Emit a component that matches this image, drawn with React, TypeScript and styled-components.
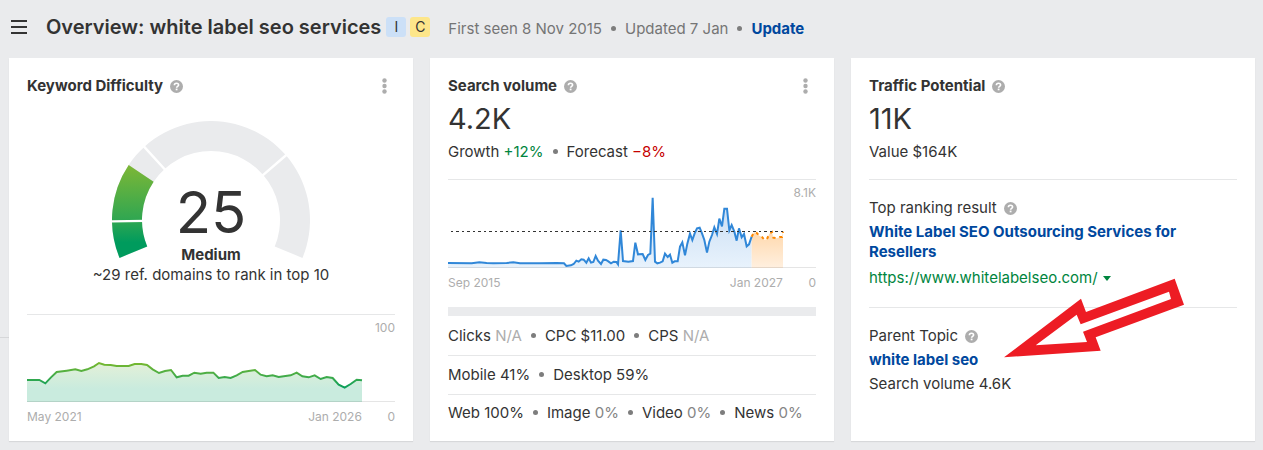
import React from "react";
import styled, { createGlobalStyle, css } from "styled-components";

const GlobalStyle = createGlobalStyle`
  *, *::before, *::after { box-sizing: border-box; }
  body {
    margin: 0;
    background: #eaebed;
    color: #333;
    font-family: Inter, "Liberation Sans", sans-serif;
    font-size: 15px;
    line-height: 20px;
  }
  h1, h2, p { margin: 0; }
  button { font: inherit; color: inherit; border: 0; padding: 0; background: none; cursor: pointer; }
  a { color: #00489e; text-decoration: none; }
  svg { display: block; }
`;

const Page = styled.div`
  padding: 0 8px 8px 9px;
`;

const TopBar = styled.header`
  display: flex;
  align-items: center;
  height: 58px;
  padding: 0 0 5px 1px;
`;

const MenuButton = styled.button`
  width: 18px;
  margin-right: 18px;
`;

const Title = styled.h1`
  font-size: 20px;
  line-height: 28px;
  font-weight: 600;
  margin-right: 5px;
  white-space: nowrap;
`;

const Intent = styled.span<{ $color: string }>`
  width: 20px;
  height: 20px;
  margin-right: 4px;
  border-radius: 3px;
  background: ${(p) => p.$color};
  font-size: 14px;
  line-height: 20px;
  text-align: center;
`;

const Meta = styled.p`
  margin-left: 14px;
  padding-top: 4px;
  color: #757575;
  white-space: nowrap;
  a { font-weight: 700; }
`;

const Dot = styled.span`
  display: inline-block;
  width: 5px;
  height: 5px;
  margin: 0 9px;
  border-radius: 50%;
  background: #7d7d7d;
  vertical-align: 3px;
`;

const Cards = styled.main`
  position: relative;
  display: grid;
  grid-template-columns: repeat(3, minmax(0, 1fr));
  gap: 17px;
  &::before {
    content: "";
    position: absolute;
    left: -9px;
    top: 279px;
    width: 9px;
    height: 1px;
    background: #d6d7d9;
  }
`;

const Card = styled.section`
  position: relative;
  display: flex;
  flex-direction: column;
  padding: 16px 18px 10px;
  background: #fff;
  box-shadow: 0 1px 1px rgba(0, 0, 0, 0.08);
`;

const CardHeader = styled.div`
  display: flex;
  align-items: center;
  justify-content: space-between;
  height: 24px;
`;

const Label = styled.div`
  display: flex;
  align-items: center;
  gap: 7px;
  line-height: 24px;
`;

const CardTitle = styled.h2`
  font-size: 15px;
  line-height: 24px;
  font-weight: 700;
`;

const IconButton = styled.button`
  display: block;
  flex: none;
`;

const KebabButton = styled(IconButton)`
  padding: 0 8px;
`;

const Value = styled.p`
  margin-top: 3px;
  font-size: 29px;
  line-height: 36px;
`;

const SubLine = styled.p`
  line-height: 24px;
`;

const Summary = styled.div`
  padding-bottom: 15px;
  ${SubLine} { margin-top: 3px; }
`;

const Tone = styled.span<{ $color: string }>`
  color: ${(p) => p.$color};
`;

const GaugeBox = styled.div`
  display: flex;
  flex-direction: column;
  align-items: center;
  padding-top: 23px;
`;

const GaugeText = styled.div`
  display: flex;
  flex-direction: column;
  align-items: center;
  margin-top: -77px;
  margin-bottom: 29px;
  white-space: nowrap;
`;

const Score = styled.span`
  font-size: 58px;
  line-height: 60px;
`;

const Strong = styled.strong`
  font-weight: 700;
  line-height: 20px;
  margin-top: 3px;
`;

const Chart = styled.figure`
  position: relative;
  margin: 0;
  border-top: 1px solid #e6e7e8;
`;

const Plot = styled.svg<{ $h: number }>`
  width: 100%;
  height: ${(p) => p.$h}px;
  polyline, line { vector-effect: non-scaling-stroke; }
`;

const axisText = css`
  color: #adadad;
  font-size: 12px;
  line-height: 16px;
`;

const MaxLabel = styled.span`
  ${axisText}
  position: absolute;
  top: 5px;
  right: 0;
`;

const Axis = styled.figcaption`
  ${axisText}
  display: flex;
  justify-content: space-between;
  margin-top: 7px;
`;

const AxisRange = styled.span`
  display: flex;
  justify-content: space-between;
  width: 91%;
`;

const Band = styled.div`
  height: 9px;
  margin: 16px 0 1px;
  background: #eaebed;
`;

const StatRow = styled.p`
  line-height: 38px;
  border-bottom: 1px solid #e6e7e8;
  white-space: nowrap;
  &:last-child { border-bottom: 0; line-height: 36px; }
`;

const Block = styled.div`
  border-top: 1px solid #e6e7e8;
  padding: 16px 0 17px;
`;

const BoldLink = styled.a`
  display: block;
  font-weight: 700;
  line-height: 20px;
  margin: 2px 0;
`;

const UrlRow = styled.div`
  display: flex;
  align-items: center;
  gap: 5px;
  margin-top: 4px;
  line-height: 24px;
  a { color: #00853e; }
`;

const Arrow = styled.svg`
  position: absolute;
  left: 153px;
  top: 218px;
`;

const Help = ({ about }: { about: string }) => (
  <IconButton type="button" aria-label={`About ${about}`}>
    <svg width="13" height="13" viewBox="0 0 13 13">
      <circle cx="6.5" cy="6.5" r="6.5" fill="#adadad" />
      <path d="M4.4 5.2c0-1.2.9-1.9 2.1-1.9s2.1.7 2.1 1.7c0 1.3-2 1.3-2 2.7" fill="none" stroke="#fff" strokeWidth="1.6" />
      <rect x="5.7" y="8.6" width="1.8" height="1.7" fill="#fff" />
    </svg>
  </IconButton>
);

const Kebab = () => (
  <KebabButton type="button" aria-label="More options">
    <svg width="5" height="16" viewBox="0 0 5 16" fill="#adadad">
      <circle cx="2.5" cy="2.5" r="2.2" />
      <circle cx="2.5" cy="8" r="2.2" />
      <circle cx="2.5" cy="13.5" r="2.2" />
    </svg>
  </KebabButton>
);

const CX = 99;
const CY = 99;

/* Degrees run clockwise from the nine o'clock position. */
const polar = (r: number, deg: number) => {
  const a = (deg * Math.PI) / 180;
  return `${(CX - r * Math.cos(a)).toFixed(2)} ${(CY - r * Math.sin(a)).toFixed(2)}`;
};
const ring = (from: number, to: number) => {
  const large = to - from > 180 ? 1 : 0;
  return `M${polar(99, from)}A99 99 0 ${large} 1 ${polar(99, to)}L${polar(69, to)}A69 69 0 ${large} 0 ${polar(69, from)}Z`;
};
const divider = (deg: number) => `M${polar(66, deg)}L${polar(101, deg)}`;

const Gauge = () => (
  <svg width="198" height="138" viewBox="0 0 198 138">
    <defs>
      <linearGradient id="gauge" x1="0" y1="44" x2="0" y2="130" gradientUnits="userSpaceOnUse">
        <stop offset="0" stopColor="#7db736" />
        <stop offset="0.65" stopColor="#2ea652" />
        <stop offset="0.9" stopColor="#009b5d" />
      </linearGradient>
    </defs>
    <path d={ring(-22.5, 202.5)} fill="#eaebed" />
    <path d={ring(-22.5, 33.75)} fill="url(#gauge)" />
    <path d={divider(-0.8) + divider(47.6) + divider(139.2)} stroke="#fff" strokeWidth="2.4" />
  </svg>
);

const difficulty =
  "0,198 37,198 55,208 72,190 89,174 119,170 145,166 163,171 181,166 201,157 216,147 232,152 251,153 269,156 305,156 323,150 343,150 360,153 377,166 396,177 414,171 432,168 449,190 467,185 485,185 502,176 521,179 539,176 559,176 575,192 593,189 611,192 629,184 647,174 665,171 684,168 701,182 719,187 737,184 755,189 791,184 809,176 826,187 845,190 863,184 881,195 899,189 917,192 935,212 953,221 971,210 989,197 1005,199";

const volume =
  "0,252 71,253 94,250 116,252 136,253 176,252 196,250 216,253 276,253 326,252 348,253 355,261 369,259 377,255 385,245 392,248 400,241 407,242 415,251 422,238 429,251 436,249 443,231 450,245 459,255 466,242 474,243 481,247 489,253 497,248 505,249 510,256 518,154 525,246 541,248 555,246 562,191 570,226 584,225 592,243 600,228 607,224 614,56 621,248 628,253 636,251 644,247 651,224 659,234 666,227 673,251 680,247 689,247 696,203 703,190 711,229 718,194 726,164 733,183 740,163 747,148 755,146 762,163 769,183 777,221 784,188 792,168 799,145 807,165 814,119 822,142 829,89 837,89 844,154 851,138 859,158 866,185 873,148 881,175 888,165 896,202 903,196 911,173";

const forecast =
  "911,173 918,160 926,162 934,170 942,174 950,183 957,180 964,164 972,159 976,176 986,178 996,174 1002,174 1005,158";

export default function App() {
  return (
    <>
      <GlobalStyle />
      <Page>
        <TopBar>
          <MenuButton type="button" aria-label="Menu">
            <svg width="18" height="14" viewBox="0 0 18 14" fill="#333">
              <path d="M1 0h16v2H1zM1 6h16v2H1zM1 12h16v2H1z" />
            </svg>
          </MenuButton>
          <Title>Overview: white label seo services</Title>
          <Intent $color="#cce0f7">I</Intent>
          <Intent $color="#fde68a">C</Intent>
          <Meta>
            First seen 8 Nov 2015
            <Dot />
            Updated 7 Jan
            <Dot />
            <a href="#update">Update</a>
          </Meta>
        </TopBar>

        <Cards>
          <Card>
            <CardHeader>
              <Label>
                <CardTitle>Keyword Difficulty</CardTitle>
                <Help about="Keyword Difficulty" />
              </Label>
              <Kebab />
            </CardHeader>
            <GaugeBox>
              <Gauge />
              <GaugeText>
                <Score>25</Score>
                <Strong>Medium</Strong>
                <span>~29 ref. domains to rank in top 10</span>
              </GaugeText>
            </GaugeBox>
            <Chart>
              <Plot $h={87} viewBox="0 3 1104 261" preserveAspectRatio="none">
                <defs>
                  <linearGradient id="kdLine" x1="0" y1="147" x2="0" y2="221" gradientUnits="userSpaceOnUse">
                    <stop offset="0" stopColor="#76b82f" />
                    <stop offset="0.5" stopColor="#45ac48" />
                    <stop offset="1" stopColor="#0a9f5c" />
                  </linearGradient>
                  <linearGradient id="kdFill" x1="0" y1="147" x2="0" y2="225" gradientUnits="userSpaceOnUse">
                    <stop offset="0" stopColor="#e3f0d8" />
                    <stop offset="1" stopColor="#c9ebde" />
                  </linearGradient>
                </defs>
                <polygon points={`0,264 ${difficulty} 1005,264`} fill="url(#kdFill)" />
                <line x1="0" y1="262" x2="1104" y2="262" stroke="#000" strokeOpacity="0.1" shapeRendering="crispEdges" />
                <polyline points={difficulty} fill="none" stroke="url(#kdLine)" strokeWidth="2" />
              </Plot>
              <MaxLabel>100</MaxLabel>
              <Axis>
                <AxisRange>
                  <span>May 2021</span>
                  <span>Jan 2026</span>
                </AxisRange>
                <span>0</span>
              </Axis>
            </Chart>
          </Card>

          <Card>
            <CardHeader>
              <Label>
                <CardTitle>Search volume</CardTitle>
                <Help about="Search volume" />
              </Label>
              <Kebab />
            </CardHeader>
            <Summary>
              <Value>4.2K</Value>
              <SubLine>
                Growth <Tone $color="#00853e">+12%</Tone>
                <Dot />
                Forecast <Tone $color="#c60000">−8%</Tone>
              </SubLine>
            </Summary>
            <Chart>
              <Plot $h={88} viewBox="0 3 1104 264" preserveAspectRatio="none">
                <defs>
                  <linearGradient id="svFill" x1="0" y1="56" x2="0" y2="264" gradientUnits="userSpaceOnUse">
                    <stop offset="0" stopColor="#c6dcf3" />
                    <stop offset="1" stopColor="#e8f2fc" />
                  </linearGradient>
                  <linearGradient id="fcFill" x1="0" y1="160" x2="0" y2="264" gradientUnits="userSpaceOnUse">
                    <stop offset="0" stopColor="#ffd9ae" />
                    <stop offset="1" stopColor="#ffefde" />
                  </linearGradient>
                </defs>
                <polygon points={`0,267 ${volume} 911,267`} fill="url(#svFill)" />
                <polygon points={`911,267 ${forecast} 1005,267`} fill="url(#fcFill)" />
                <line x1="0" y1="265" x2="1104" y2="265" stroke="#000" strokeOpacity="0.1" shapeRendering="crispEdges" />
                <polyline points={volume} fill="none" stroke="#3087d8" strokeWidth="2" />
                <polyline points={forecast} fill="none" stroke="#ff8800" strokeWidth="2" strokeDasharray="3 4" />
                <line x1="9" y1="158" x2="1005" y2="158" stroke="#333" strokeDasharray="2 3 3 3" shapeRendering="crispEdges" />
              </Plot>
              <MaxLabel>8.1K</MaxLabel>
              <Axis>
                <AxisRange>
                  <span>Sep 2015</span>
                  <span>Jan 2027</span>
                </AxisRange>
                <span>0</span>
              </Axis>
            </Chart>
            <Band />
            <div>
              <StatRow>
                Clicks <Tone $color="#adadad">N/A</Tone>
                <Dot />
                CPC $11.00
                <Dot />
                CPS <Tone $color="#adadad">N/A</Tone>
              </StatRow>
              <StatRow>
                Mobile 41%
                <Dot />
                Desktop 59%
              </StatRow>
              <StatRow>
                Web 100%
                <Dot />
                Image <Tone $color="#858585">0%</Tone>
                <Dot />
                Video <Tone $color="#858585">0%</Tone>
                <Dot />
                News <Tone $color="#858585">0%</Tone>
              </StatRow>
            </div>
          </Card>

          <Card>
            <CardHeader>
              <Label>
                <CardTitle>Traffic Potential</CardTitle>
                <Help about="Traffic Potential" />
              </Label>
            </CardHeader>
            <Summary>
              <Value>11K</Value>
              <SubLine>Value $164K</SubLine>
            </Summary>
            <Block>
              <Label>
                Top ranking result
                <Help about="Top ranking result" />
              </Label>
              <BoldLink href="#result">White Label SEO Outsourcing Services for Resellers</BoldLink>
              <UrlRow>
                <a href="#site">https://www.whitelabelseo.com/</a>
                <IconButton type="button" aria-label="Site actions">
                  <svg width="8" height="5" viewBox="0 0 8 5">
                    <path d="M0 0h8L4 5z" fill="#00853e" />
                  </svg>
                </IconButton>
              </UrlRow>
            </Block>
            <Block>
              <Label>
                Parent Topic
                <Help about="Parent Topic" />
              </Label>
              <BoldLink href="#topic">white label seo</BoldLink>
              <SubLine>Search volume 4.6K</SubLine>
            </Block>
            <Arrow width="182" height="82" viewBox="0 0 546 246" fill="#ed1c24">
              <path fill="#fff" d="M95 208 218 116 230 145 495 47 501 69 237 167 249 198Z" />
              <path
                fillRule="evenodd"
                d="M0 244 231 68 246 108 512 8 540 86 275 184 290 224ZM95 208 249 198 237 167 501 69 495 47 230 145 218 116Z"
              />
            </Arrow>
          </Card>
        </Cards>
      </Page>
    </>
  );
}
